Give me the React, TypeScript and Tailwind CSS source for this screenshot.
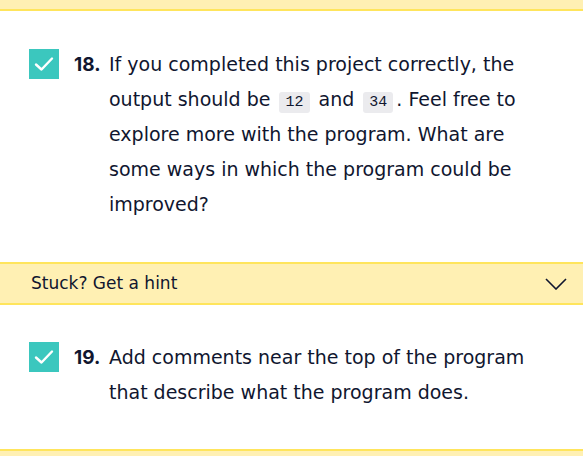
import React from "react";

const font = { fontFamily: "'DejaVu Sans', 'Noto Sans', sans-serif" };

function Check() {
  return (
    <div className="mt-[2px] flex h-[30px] w-[30px] shrink-0 items-center justify-center bg-[#3bc7be]">
      <svg width="22" height="22" viewBox="0 0 22 22" fill="none">
        <path d="M3 11.5 L8.5 16.5 L19 5.5" stroke="white" strokeWidth="2.4" strokeLinecap="round" strokeLinejoin="round" />
      </svg>
    </div>
  );
}

function Code({ children }: { children: React.ReactNode }) {
  return (
    <code className="mx-[3px] rounded-[3px] bg-[#ebebee] px-[6px] py-[2px] font-['Liberation_Mono',monospace] text-[15px] leading-[20px] text-[#10162f]">
      {children}
    </code>
  );
}

export default function App() {
  return (
    <div className="w-[583px] h-[456px] overflow-hidden bg-white text-[#10162f]" style={font}>
      <div className="h-[11px] border-b-2 border-[#ffe55c] bg-[#fff0b3]" />
      <div className="flex items-start pl-[29px] pr-[30px] pt-[36px] pb-[40px]">
        <Check />
        <div className="ml-[15px] w-[35px] shrink-0 font-['Inter',sans-serif] text-[19px] font-bold leading-[35px]">18.</div>
        <p className="text-[19px] leading-[35px]">
          If you completed this project correctly, the output should be <Code>12</Code> and <Code>34</Code>. Feel free to explore more with the program. What are some ways in which the program could be improved?
        </p>
      </div>
      <div className="flex h-[43px] items-center justify-between border-y-2 border-[#ffe55c] bg-[#fff0b3] pl-[31px] pr-[16px]">
        <span className="text-[17px]">Stuck? Get a hint</span>
        <svg width="22" height="12" viewBox="0 0 22 12" fill="none">
          <path d="M1 1 L11 11 L21 1" stroke="#10162f" strokeWidth="1.6" />
        </svg>
      </div>
      <div className="flex items-start pl-[29px] pr-[30px] pt-[35px] pb-[39px]">
        <Check />
        <div className="ml-[15px] w-[35px] shrink-0 font-['Inter',sans-serif] text-[19px] font-bold leading-[35px]">19.</div>
        <p className="text-[19px] leading-[35px]">
          Add comments near the top of the program that describe what the program does.
        </p>
      </div>
      <div className="h-[20px] border-t-2 border-[#ffe55c] bg-[#fff0b3]" />
    </div>
  );
}
